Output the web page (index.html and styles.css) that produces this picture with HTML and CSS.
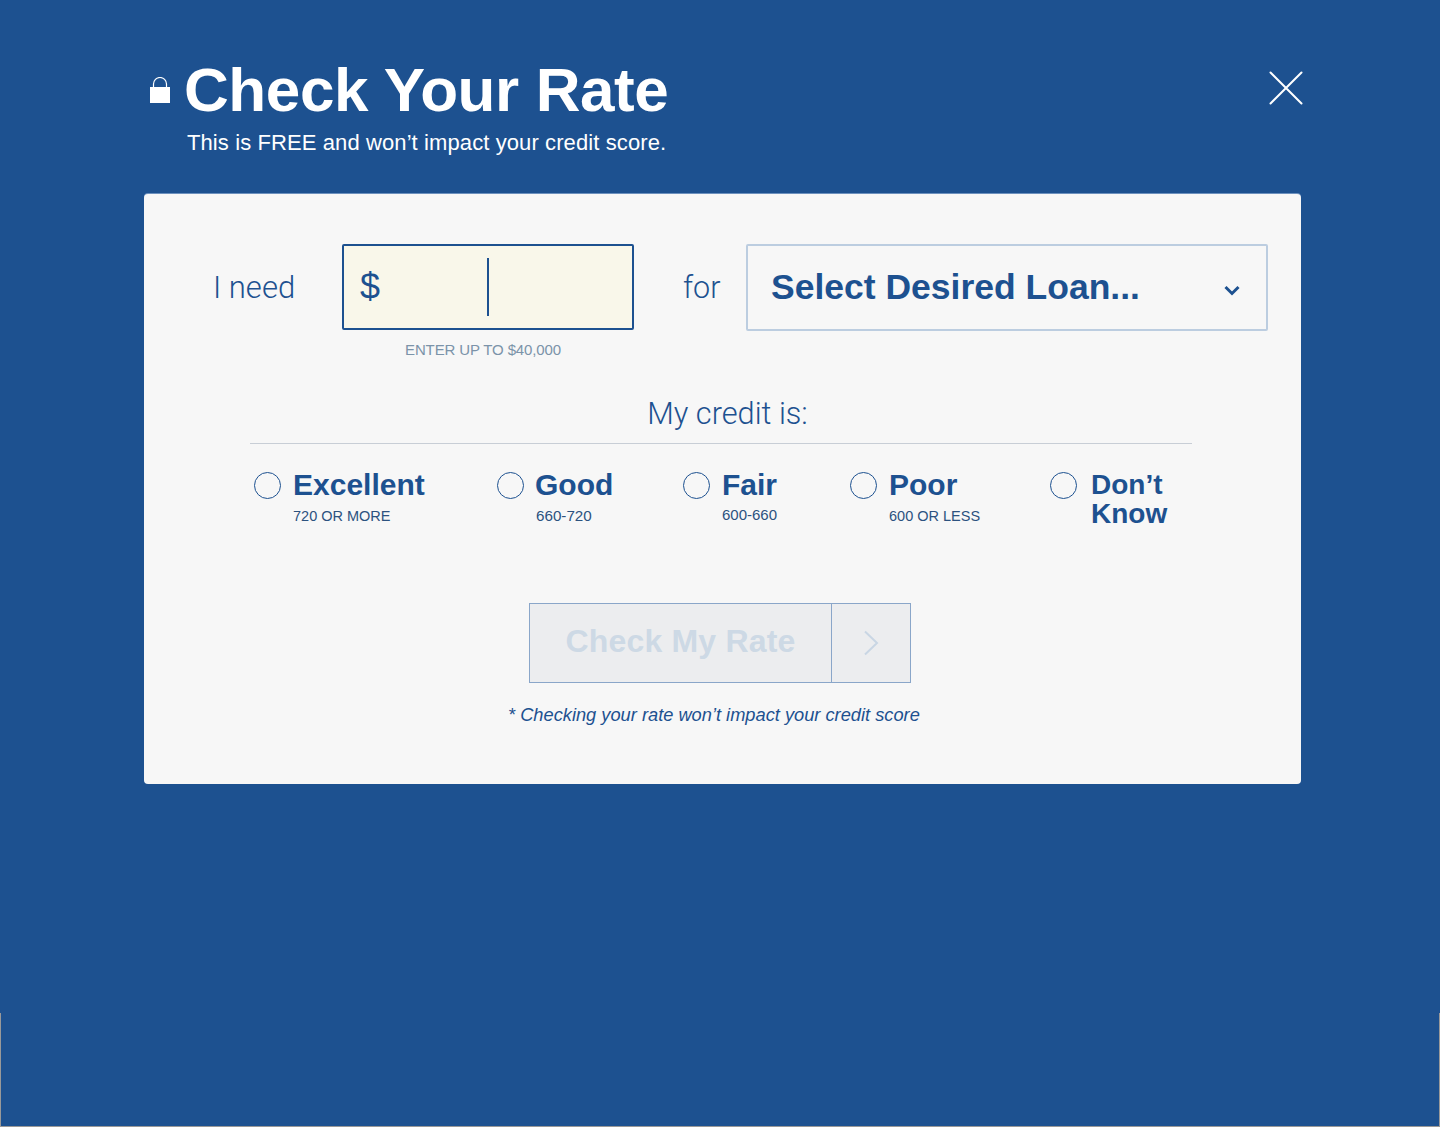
FILE: index.html
```html
<!DOCTYPE html>
<html lang="en">
<head>
<meta charset="utf-8">
<title>Check Your Rate</title>
<link rel="stylesheet" href="styles.css">
</head>
<body>
<div class="page">
  <header class="head">
    <svg class="lock" width="22" height="27" viewBox="0 0 22 27" aria-hidden="true">
      <path d="M4.500 11V7a6.500 6.500 0 0 1 13 0V11" fill="none" stroke="#fff" stroke-width="1.200"/>
      <rect x="1" y="10" width="20" height="16" fill="#fff"/>
    </svg>
    <div class="head-text">
      <h1 class="title">Check Your Rate</h1>
      <p class="sub">This is FREE and won’t impact your credit score.</p>
    </div>
    <svg class="close" width="34" height="34" viewBox="0 0 34 34" aria-hidden="true">
      <path d="M1.500 1.500L32.500 32.500M32.500 1.500L1.500 32.500" stroke="#fff" stroke-width="2" stroke-linecap="round"/>
    </svg>
  </header>

  <main class="card">
    <div class="need-row">
      <span class="need-label">I need</span>
      <div class="amount-col">
        <div class="amount"><span class="dollar">$</span><span class="caret"></span></div>
        <div class="hint">ENTER UP TO $40,000</div>
      </div>
      <span class="for-label">for</span>
      <div class="select">
        <span class="select-text">Select Desired Loan...</span>
        <svg class="chev" width="16" height="11" viewBox="0 0 16 11" aria-hidden="true"><path d="M1.500 2L8 8.500L14.500 2" fill="none" stroke="#1d5190" stroke-width="3"/></svg>
      </div>
    </div>

    <h2 class="credit-title">My credit is:</h2>
    <div class="credit-opts">
      <div class="opt opt-exc"><span class="radio"></span><div><div class="opt-name">Excellent</div><div class="opt-sub">720 OR MORE</div></div></div>
      <div class="opt opt-good"><span class="radio"></span><div><div class="opt-name">Good</div><div class="opt-sub opt-sub-num opt-sub-good">660-720</div></div></div>
      <div class="opt opt-fair"><span class="radio"></span><div><div class="opt-name">Fair</div><div class="opt-sub opt-sub-num opt-sub-up">600-660</div></div></div>
      <div class="opt opt-poor"><span class="radio"></span><div><div class="opt-name">Poor</div><div class="opt-sub">600 OR LESS</div></div></div>
      <div class="opt opt-dk"><span class="radio"></span><div class="opt-name opt-name-dk">Don’t<br>Know</div></div>
    </div>

    <div class="cta">
      <div class="cta-label">Check My Rate</div>
      <div class="cta-arrow">
        <svg width="16" height="26" viewBox="0 0 16 26" aria-hidden="true"><path d="M2 1.500L14 13L2 24.500" fill="none" stroke="#c9d6e4" stroke-width="2"/></svg>
      </div>
    </div>
    <p class="note">* Checking your rate won’t impact your credit score</p>
  </main>

  <footer class="foot"></footer>
</div>
</body>
</html>
```

FILE: styles.css
```css
* { box-sizing: border-box; }
html, body { margin: 0; padding: 0; }
body { background: #1d5190; font-family: "Liberation Sans", Arial, sans-serif; color: #1d5190; }
.page { min-height: 1127px; display: flex; flex-direction: column; align-items: stretch; }

.head { display: flex; align-items: flex-start; height: 194px; padding: 0 137px 0 149px; }
.lock { margin-top: 77px; flex: none; }
.head-text { margin-left: 13px; flex: 1; }
.title { margin: 54px 0 0; font-size: 62px; line-height: 72px; font-weight: 700; color: #fff; letter-spacing: -0.4px; }
.sub { margin: 2px 0 0 3px; font-size: 22px; line-height: 30px; color: #fff; letter-spacing: 0.1px; }
.close { margin-top: 71px; flex: none; }

.card { margin-left: 144px; width: 1157px; height: 590px; background: #f7f7f7; border-radius: 4px; padding: 50px 33px 0 69px; box-shadow: 0 -1px 0 rgba(190, 210, 235, 0.5); }
.need-row { display: flex; align-items: flex-start; height: 130px; }
.need-label, .for-label { font-family: Roboto, "Liberation Sans", sans-serif; font-weight: 300; font-size: 31px; line-height: 88px; }
.need-label { width: 129px; }
.amount-col { width: 292px; }
.amount { height: 86px; border: 2px solid #1d5190; border-radius: 2px; background: #f9f7ea; display: flex; align-items: center; padding-left: 16px; }
.dollar { font-size: 36px; width: 127px; }
.caret { width: 2px; height: 58px; background: #1d5190; }
.hint { margin-top: 10px; margin-right: 10px; text-align: center; font-size: 15px; line-height: 20px; letter-spacing: -0.13px; color: #7b93a9; }
.for-label { margin-left: 49px; width: 63px; font-size: 30.500px; }
.select { flex: 1; height: 87px; border: 2px solid #bccde0; border-radius: 2px; display: flex; align-items: center; justify-content: space-between; padding: 0 26px 0 23px; }
.select-text { font-size: 35.500px; font-weight: 700; }
.chev { margin-top: 6px; }

.credit-title { margin: 21px 0 0 -69px; padding-left: 10px; width: 1157px; text-align: center; font-family: Roboto, "Liberation Sans", sans-serif; font-weight: 300; font-size: 30.700px; line-height: 38px; }
.credit-opts { margin: 10px 0 0 37px; width: 942px; border-top: 1px solid #c8ced6; height: 160px; display: flex; padding-top: 26px; }
.opt { display: flex; align-items: flex-start; }
.radio { flex: none; width: 27px; height: 27px; border: 1.500px solid #1d5190; border-radius: 50%; margin-top: 2px; margin-right: 12px; }
.opt-name { font-size: 30px; line-height: 29px; font-weight: 700; }
.opt-name-dk { font-size: 28px; }
.opt-sub { font-size: 14.500px; line-height: 20px; margin-top: 7px; color: #2c527f; }
.opt-sub-num { font-size: 15px; }
.opt-sub-good { font-size: 15.200px; padding-left: 1px; }
.opt-sub-up { margin-top: 6px; }
.opt-exc { margin-left: 4px; width: 243px; }
.opt-good { width: 186px; }
.opt-good .radio { margin-right: 11px; }
.opt-fair { width: 167px; }
.opt-poor { width: 200px; }
.opt-dk .radio { margin-right: 14px; }

.cta { margin-left: 316px; width: 382px; height: 80px; border: 1px solid #8aa6c9; background: #ecedef; display: flex; }
.cta-label { width: 302px; border-right: 1px solid #8aa6c9; text-align: center; font-size: 32px; font-weight: 700; line-height: 75px; letter-spacing: 0.2px; color: #cdd9e5; }
.cta-arrow { flex: 1; display: flex; align-items: center; justify-content: center; }
.note { margin: 20px 0 0 295px; font-size: 18.250px; line-height: 24px; font-style: italic; }

.foot { margin-top: auto; height: 114px; border: 1px solid #999; border-top: 0; }
```
